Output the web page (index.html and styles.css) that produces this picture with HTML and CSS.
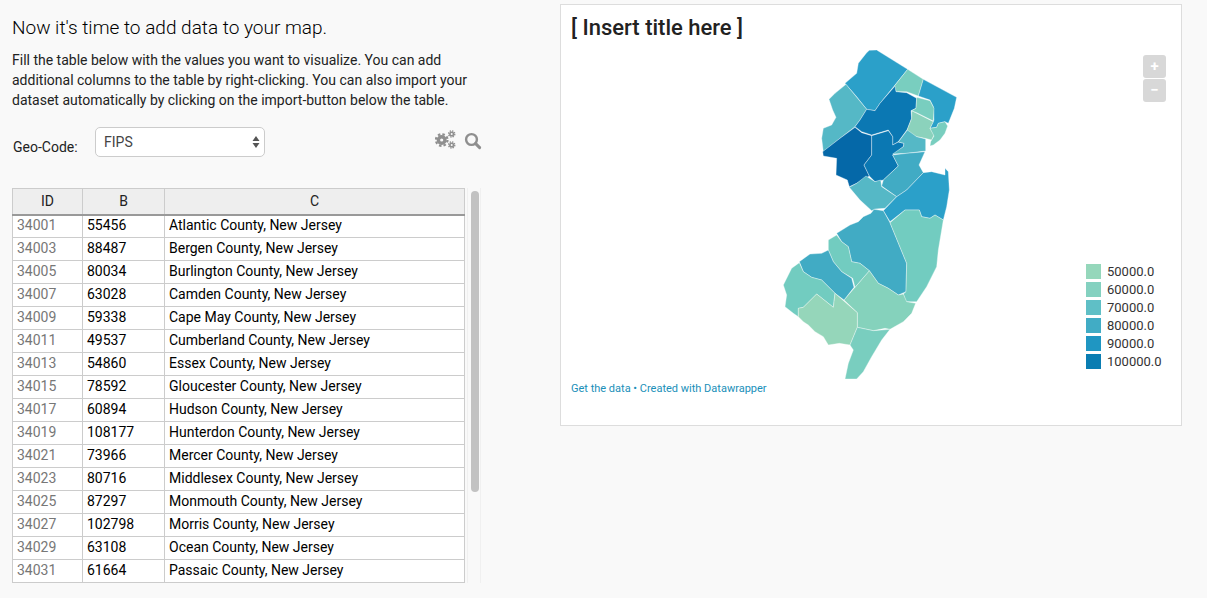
FILE: index.html
```html
<!DOCTYPE html>
<html lang="en">
<head>
    <meta charset="UTF-8">
    <meta name="viewport" content="width=device-width, initial-scale=1.0">
    <title>Add data to your map</title>
    <link rel="stylesheet" href="styles.css">
</head>
<body>
    <div class="page">
        <div class="data-panel">
            <h3 class="panel-title">Now it's time to add data to your map.</h3>
            <p class="panel-intro">Fill the table below with the values you want to visualize. You can add additional columns to the table by right-clicking. You can also import your dataset automatically by clicking on the import-button below the table.</p>

            <div class="geo-row">
                <label class="geo-label" for="geoCode">Geo-Code:</label>
                <div class="select-wrap">
                    <select class="geo-select" id="geoCode">
                        <option>FIPS</option>
                    </select>
                    <svg class="select-arrows" width="8" height="14" viewBox="0 0 8 14">
                        <path d="M4 1 L7.5 6 L.5 6 Z M.5 8 L7.5 8 L4 13 Z" fill="#555"/>
                    </svg>
                </div>
                <div class="tools">
                    <svg width="22" height="22" viewBox="0 0 22 22">
                        <g fill="none" stroke="#8f8f8f">
                            <circle cx="6.7" cy="10" r="3.3" stroke-width="3.4"/>
                            <circle cx="6.7" cy="10" r="5.8" stroke-width="2.2" stroke-dasharray="2.5 2.05"/>
                            <circle cx="16.7" cy="4" r="1.8" stroke-width="1.6"/>
                            <circle cx="16.7" cy="4" r="3.1" stroke-width="1.3" stroke-dasharray="1.4 1.03"/>
                            <circle cx="16.7" cy="15" r="1.8" stroke-width="1.6"/>
                            <circle cx="16.7" cy="15" r="3.1" stroke-width="1.3" stroke-dasharray="1.4 1.03"/>
                        </g>
                    </svg>
                    <svg width="18" height="18" viewBox="0 0 18 18">
                        <circle cx="7.5" cy="7.5" r="5.4" fill="none" stroke="#8f8f8f" stroke-width="2.4"/>
                        <path d="M11.6 11.6 L15.6 15.6" stroke="#8f8f8f" stroke-width="3" stroke-linecap="round"/>
                    </svg>
                </div>
            </div>

            <div class="table-wrap">
                <div class="table-clip">
                    <table class="data-table">
                        <colgroup>
                            <col class="col-id">
                            <col class="col-b">
                            <col class="col-c">
                        </colgroup>
                        <thead>
                            <tr><th>ID</th><th>B</th><th>C</th></tr>
                        </thead>
                        <tbody>
                            <tr><td>34001</td><td>55456</td><td>Atlantic County, New Jersey</td></tr>
                            <tr><td>34003</td><td>88487</td><td>Bergen County, New Jersey</td></tr>
                            <tr><td>34005</td><td>80034</td><td>Burlington County, New Jersey</td></tr>
                            <tr><td>34007</td><td>63028</td><td>Camden County, New Jersey</td></tr>
                            <tr><td>34009</td><td>59338</td><td>Cape May County, New Jersey</td></tr>
                            <tr><td>34011</td><td>49537</td><td>Cumberland County, New Jersey</td></tr>
                            <tr><td>34013</td><td>54860</td><td>Essex County, New Jersey</td></tr>
                            <tr><td>34015</td><td>78592</td><td>Gloucester County, New Jersey</td></tr>
                            <tr><td>34017</td><td>60894</td><td>Hudson County, New Jersey</td></tr>
                            <tr><td>34019</td><td>108177</td><td>Hunterdon County, New Jersey</td></tr>
                            <tr><td>34021</td><td>73966</td><td>Mercer County, New Jersey</td></tr>
                            <tr><td>34023</td><td>80716</td><td>Middlesex County, New Jersey</td></tr>
                            <tr><td>34025</td><td>87297</td><td>Monmouth County, New Jersey</td></tr>
                            <tr><td>34027</td><td>102798</td><td>Morris County, New Jersey</td></tr>
                            <tr><td>34029</td><td>63108</td><td>Ocean County, New Jersey</td></tr>
                            <tr><td>34031</td><td>61664</td><td>Passaic County, New Jersey</td></tr>
                        </tbody>
                    </table>
                </div>
                <div class="scroll-track"><div class="scroll-thumb"></div></div>
            </div>
        </div>

        <div class="map-card">
            <h1 class="map-title">[ Insert title here ]</h1>

            <svg class="map-svg" width="220" height="350" viewBox="0 0 660 1050">
                <!-- north half -->
                <g class="county-lines">
                    <path fill="#2ba0c9" d="M255 130 L290 100 L295 70 L320 38 L328 31 L350 30 L443 88 L405 135 L360 190 L345 212 L320 208 L290 170 Z"/>
                    <path fill="#55b8c6" d="M258 133 L320 208 L300 240 L285 260 L240 295 L190 335 L185 295 L190 265 L215 255 L228 232 L218 210 L207 178 L225 160 Z"/>
                    <path fill="#79cebf" d="M443 88 L490 118 L475 168 L440 155 L408 155 L403 138 Z"/>
                    <path fill="#2ba0c9" d="M490 118 L590 172 L583 205 L565 250 L555 245 L535 250 L530 262 L510 265 L522 240 L520 200 L510 180 L475 168 Z"/>
                    <path fill="#0b78b3" d="M405 138 L408 155 L440 158 L470 175 L468 205 L453 212 L455 235 L442 268 L415 305 L398 315 L398 290 L385 270 L335 285 L305 275 L285 260 L300 240 L320 208 L345 212 L360 190 Z"/>
                    <path fill="#0568a8" d="M285 262 L305 278 L335 287 L335 345 L312 375 L328 408 L290 430 L268 440 L262 420 L228 405 L230 355 L190 348 L188 335 L240 295 Z"/>
                    <path fill="#0b78b3" d="M335 287 L385 272 L398 290 L398 315 L415 306 L432 310 L430 320 L398 345 L415 378 L370 420 L345 425 L328 408 L312 375 L335 345 Z"/>
                    <path fill="#8bd2bc" d="M455 212 L520 245 L510 265 L522 285 L515 300 L495 295 L470 290 L445 280 L442 268 L455 235 Z"/>
                    <path fill="#79cebf" d="M535 250 L555 245 L563 258 L555 280 L540 300 L520 315 L510 318 L512 305 L522 288 L510 265 L530 262 Z"/>
                    <path fill="#79cebf" d="M470 172 L510 182 L522 205 L520 243 L470 218 L455 212 L468 205 Z"/>
                    <path fill="#55b8c6" d="M442 270 L470 290 L497 297 L497 333 L440 340 L398 342 L430 320 L432 310 L415 306 Z"/>
                    <path fill="#41abc4" d="M398 345 L440 340 L495 335 L477 375 L490 398 L440 450 L410 470 L365 438 L370 420 L415 378 Z"/>
                    <path fill="#55b8c6" d="M268 442 L290 430 L318 408 L345 425 L362 420 L365 440 L410 470 L375 505 L345 507 L335 512 L300 480 Z"/>
                    <path fill="#2ba0c9" d="M490 398 L515 395 L555 405 L555 385 L565 395 L568 450 L560 500 L550 540 L525 525 L510 535 L485 530 L478 510 L435 510 L390 545 L370 512 L410 470 L440 450 Z"/>
                </g>
                <!-- south half -->
                <g class="county-lines" transform="translate(30 480)">
                    <path fill="#41abc4" d="M200 100 L240 75 L265 65 L280 50 L303 40 L312 28 L340 32 L360 68 L410 190 L408 275 L385 285 L355 265 L325 250 L298 212 L270 190 L245 185 L235 140 L215 125 Z"/>
                    <path fill="#72ccc0" d="M360 68 L405 30 L448 30 L455 50 L480 55 L495 45 L520 60 L505 150 L500 200 L470 260 L440 305 L408 305 L400 282 L408 275 L410 190 Z"/>
                    <path fill="#85d2bc" d="M298 212 L325 250 L355 265 L385 285 L400 282 L410 305 L437 310 L425 340 L400 365 L360 388 L345 385 L310 392 L262 382 L262 338 L222 300 L255 262 Z"/>
                    <path fill="#72ccc0" d="M175 120 L200 105 L215 125 L235 140 L245 185 L270 190 L298 212 L255 262 L248 235 L215 215 L190 185 L175 150 Z"/>
                    <path fill="#41abc4" d="M88 185 L120 162 L155 160 L175 150 L190 185 L215 215 L245 235 L252 262 L222 300 L195 280 L155 240 L125 232 L100 215 Z"/>
                    <path fill="#72ccc0" d="M88 188 L100 215 L125 232 L155 240 L195 280 L190 322 L140 282 L100 322 L85 325 L85 350 L70 340 L45 320 L50 285 L40 255 L65 205 Z"/>
                    <path fill="#95d6ba" d="M140 282 L190 322 L195 280 L262 338 L262 382 L240 435 L208 430 L175 435 L160 410 L135 395 L115 375 L100 365 L85 350 L85 325 L100 322 Z"/>
                    <path fill="#79cebf" d="M262 382 L310 392 L360 388 L335 420 L305 470 L280 515 L260 537 L225 537 L235 490 L250 450 L240 435 Z"/>
                </g>
            </svg>

            <div class="zoom-btns">
                <div class="zoom-btn">+</div>
                <div class="zoom-btn">−</div>
            </div>

            <ul class="legend">
                <li><span class="swatch swatch-1"></span>50000.0</li>
                <li><span class="swatch swatch-2"></span>60000.0</li>
                <li><span class="swatch swatch-3"></span>70000.0</li>
                <li><span class="swatch swatch-4"></span>80000.0</li>
                <li><span class="swatch swatch-5"></span>90000.0</li>
                <li><span class="swatch swatch-6"></span>100000.0</li>
            </ul>

            <div class="map-footer"><a href="#">Get the data</a> • <a href="#">Created with Datawrapper</a></div>
        </div>
    </div>
</body>
</html>
```

FILE: styles.css
```css
html, body {
    height: 100%;
}

body {
    font-family: 'Roboto', sans-serif;
    margin: 0;
    padding: 0;
    background-color: #f9f9f9;
    color: #333;
    overflow: hidden;
}

.page {
    display: flex;
    align-items: flex-start;
    padding: 4px 0 0 12px;
}

.data-panel {
    width: 470px;
    margin-right: 78px;
}

.panel-title {
    margin: 13px 0 0;
    font-size: 19px;
    font-weight: 300;
    line-height: 22px;
    color: #000;
}

.panel-intro {
    margin: 11px 0 0;
    font-size: 14px;
    line-height: 20px;
    color: #222;
}

.geo-row {
    display: flex;
    align-items: flex-start;
    margin-top: 17px;
}

.geo-label {
    width: 82px;
    margin: 12px 0 0 1px;
    font-size: 14px;
    line-height: 17px;
    color: #222;
}

.select-wrap {
    position: relative;
    width: 170px;
    height: 30px;
}

.geo-select {
    display: block;
    width: 100%;
    height: 100%;
    padding: 0 8px;
    font-family: inherit;
    font-size: 14px;
    color: #444;
    background-color: #fff;
    border: 1px solid #ccc;
    border-radius: 5px;
    appearance: none;
}

.select-arrows {
    position: absolute;
    top: 8px;
    right: 5px;
}

.tools {
    display: flex;
    align-items: center;
    gap: 7px;
    margin: 3px 0 0 170px;
}

.table-wrap {
    display: flex;
    margin-top: 31px;
}

.table-clip {
    width: 453px;
    height: 395px;
    overflow: hidden;
}

.data-table {
    width: 453px;
    table-layout: fixed;
    border-collapse: collapse;
    background-color: #fff;
    font-size: 14px;
    color: #000;
}

.col-id {
    width: 70px;
}

.col-b {
    width: 82px;
}

.data-table th,
.data-table td {
    height: 23px;
    padding: 0 4px 2px;
    border: 1px solid #ccc;
    box-sizing: border-box;
    white-space: nowrap;
}

.data-table th {
    height: 26px;
    padding-bottom: 0;
    font-weight: 400;
    color: #222;
    background-color: #eee;
    box-shadow: 0 1px 0 #888;
    border-bottom: 2px solid #999;
}

.data-table td:first-child {
    color: #777;
}

.scroll-track {
    width: 14px;
    height: 395px;
    margin-left: 2px;
    padding: 3px 3px 0;
    box-sizing: border-box;
    border-left: 1px solid #f0f0f0;
    border-right: 1px solid #f0f0f0;
}

.scroll-thumb {
    width: 8px;
    height: 301px;
    background-color: #c2c2c2;
    border-radius: 4px;
}

.map-card {
    position: relative;
    width: 622px;
    height: 422px;
    box-sizing: border-box;
    background-color: #fff;
    border: 1px solid #ddd;
    display: flex;
    flex-direction: column;
    justify-content: space-between;
}

.map-title {
    margin: 9px 0 0 10px;
    font-size: 22px;
    font-weight: 500;
    line-height: 28px;
    color: #222;
}

.map-svg {
    position: absolute;
    left: 199px;
    top: 35px;
}

.county-lines path {
    stroke: #fff;
    stroke-opacity: 0.45;
    stroke-width: 2.4;
    stroke-linejoin: round;
}

.zoom-btns {
    position: absolute;
    top: 50px;
    right: 15px;
}

.zoom-btn {
    width: 23px;
    height: 23px;
    margin-bottom: 1px;
    background-color: #d8d8d8;
    border-radius: 3px;
    color: #fff;
    font-size: 15px;
    font-weight: 700;
    line-height: 22px;
    text-align: center;
}

.legend {
    position: absolute;
    left: 525px;
    top: 259px;
    margin: 0;
    padding: 0;
    list-style: none;
    font-size: 13px;
    color: #333;
}

.legend li {
    display: flex;
    align-items: center;
    height: 15px;
    margin-bottom: 3px;
}

.swatch {
    width: 15px;
    height: 15px;
    margin-right: 6px;
}

.swatch-1 { background-color: #95d7bb; }
.swatch-2 { background-color: #84d1c0; }
.swatch-3 { background-color: #5fbfc6; }
.swatch-4 { background-color: #41acc5; }
.swatch-5 { background-color: #1f96c2; }
.swatch-6 { background-color: #0a7db2; }

.map-footer {
    margin: 0 0 29px 10px;
    font-size: 11px;
    line-height: 14px;
    color: #1a8fb9;
}

.map-footer a {
    color: #1a8fb9;
    text-decoration: none;
}
```
